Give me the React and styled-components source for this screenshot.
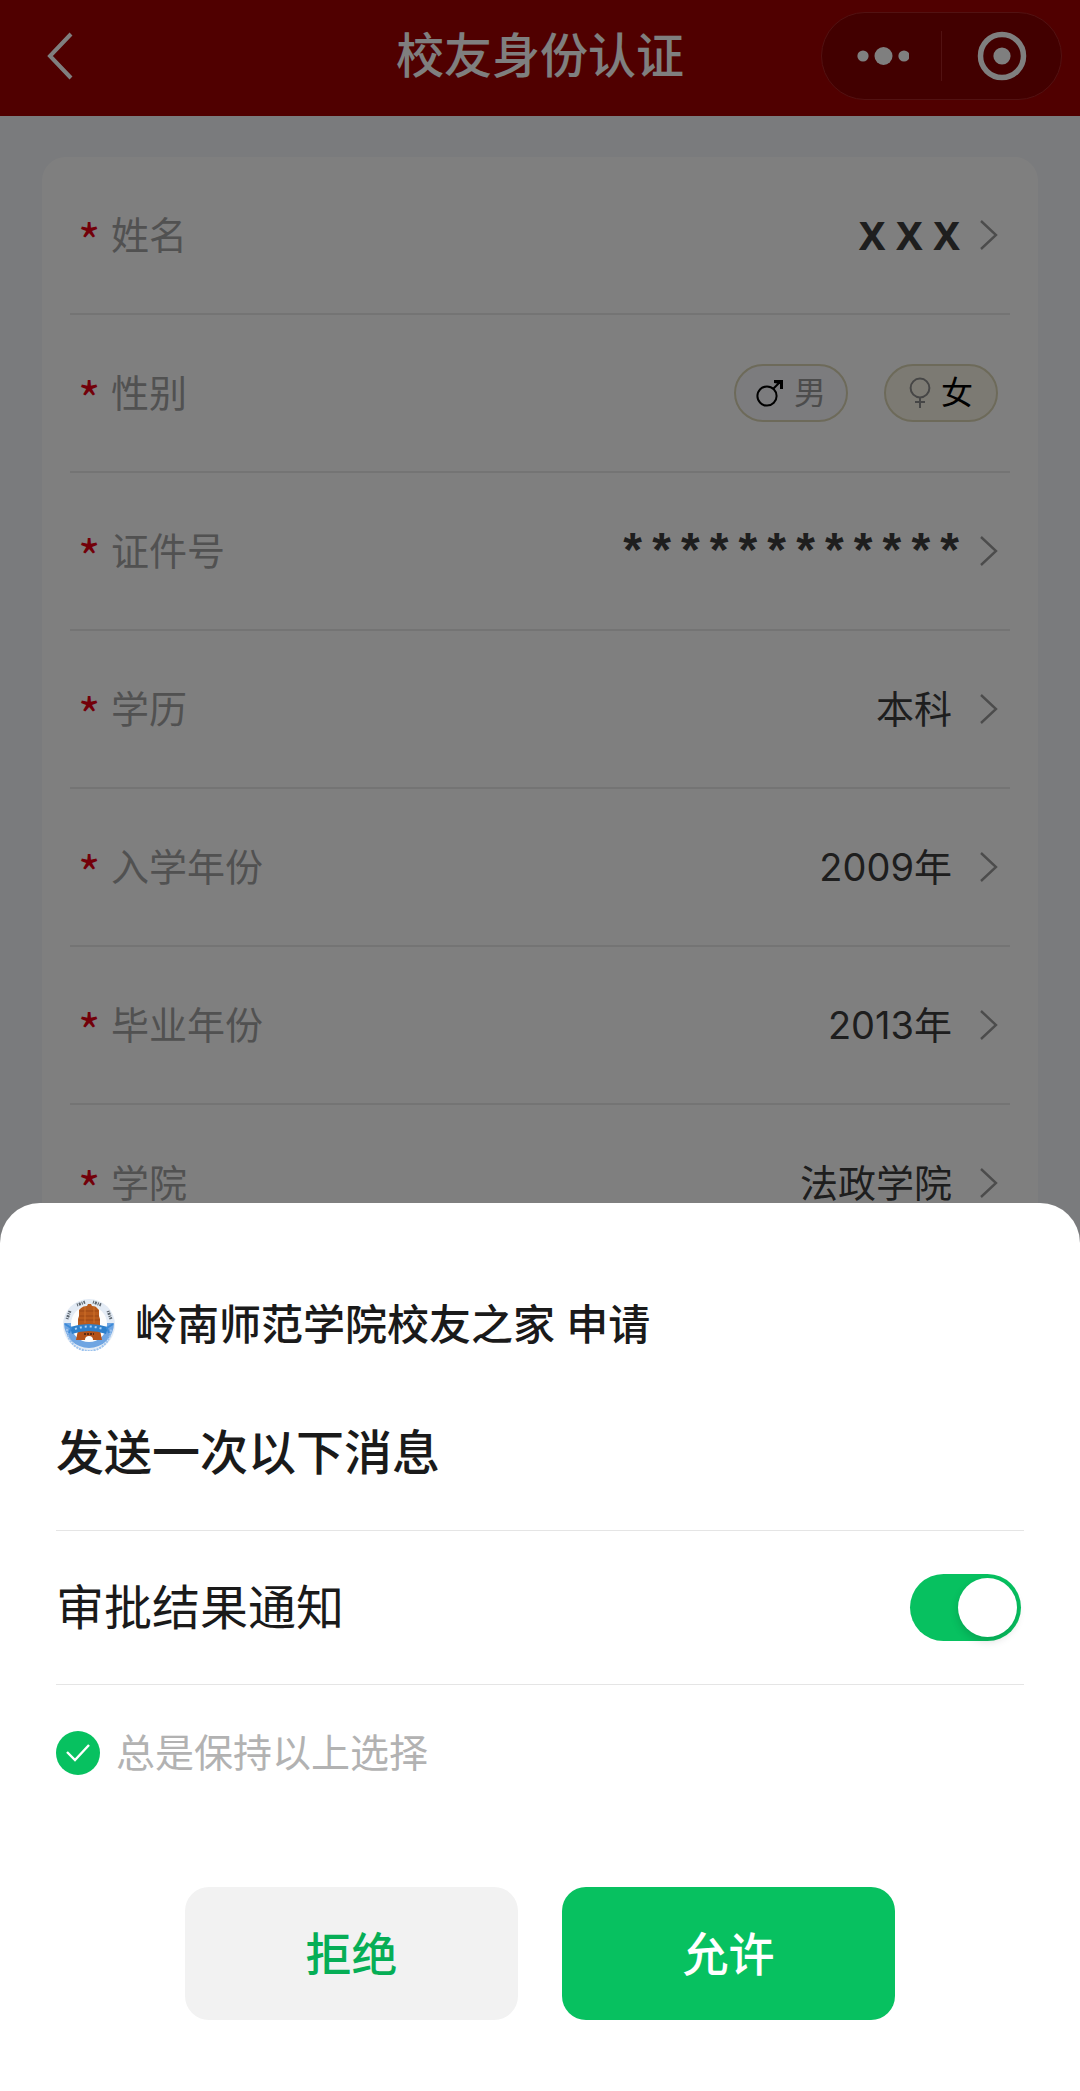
import React, { useState } from 'react'
import styled, { createGlobalStyle } from 'styled-components'

const fields = [
    { id: 'name', label: '姓名', value: 'X X X', kind: 'name' },
    { id: 'gender', label: '性别' },
    { id: 'idcard', label: '证件号', value: '************', kind: 'secret' },
    { id: 'degree', label: '学历', value: '本科' },
    { id: 'start', label: '入学年份', value: '2009年' },
    { id: 'end', label: '毕业年份', value: '2013年' },
    { id: 'college', label: '学院', value: '法政学院' },
]

const ArrowRight = () => (
    <svg width="18" height="30" viewBox="0 0 18 30" fill="none" stroke="#999" strokeWidth="2.4" aria-hidden="true">
        <path d="M1 1 L16 15 L1 29" />
    </svg>
)

const MaleIcon = () => (
    <svg width="28" height="28" viewBox="0 0 28 28" fill="none" stroke="#000" strokeWidth="2" aria-hidden="true">
        <circle cx="11" cy="17" r="9.6" />
        <path d="M17 10 L24 3" />
        <path d="M18 1 H27 V10 H24 V5 L18 4 Z" fill="#000" stroke="none" />
    </svg>
)

const FemaleIcon = () => (
    <svg width="22" height="32" viewBox="0 0 22 32" fill="none" stroke="#8c8c8c" strokeWidth="2" aria-hidden="true">
        <circle cx="11" cy="11" r="9.4" />
        <path d="M11 20 V31 M6 25 H16" />
    </svg>
)

const SchoolLogo = () => (
    <svg width="52" height="52" viewBox="0 0 52 52" aria-hidden="true">
        <circle cx="26" cy="26" r="26" fill="#e3ebf5" />
        <path d="M1 24 A25 25 0 0 0 51 24 L44 24 A18 18 0 0 1 8 24 Z" fill="#6fa5e2" />
        <circle cx="26" cy="25" r="18" fill="#fdfdfd" />
        <path
            d="M4 30 A22 22 0 0 0 48 30"
            fill="none"
            stroke="#9cc3ee"
            strokeWidth="2"
            strokeDasharray="2 1"
        />
        {/* motto marks round the top of the ring */}
        <g stroke="#5a636c" strokeWidth="3" strokeDasharray="1 1 2 1" fill="none">
            <path d="M4 20 L7 12" />
            <path d="M14 6 L22 3" />
            <path d="M30 3 L38 6" />
            <path d="M45 12 L48 20" />
        </g>
        <path d="M18 9 Q20 7 24 7 L25 5 H28 L29 7 Q33 7 34 9 L36 11 V17 L37 20 V26 H15 V20 L16 17 V11 Z" fill="#b85a1c" />
        <path d="M17 12 H35 M16 17 H36 M16 21 H37" stroke="#9a4714" strokeWidth="1" />
        <path d="M22 8 V24 M31 8 V24" stroke="#cf7029" strokeWidth="1" />
        <path d="M15 31 H37 L39 41 H30 Q30 37 26 37 Q22 37 22 41 H13 Z" fill="#b4521a" />
        <path d="M21 35 H31" stroke="#5d2a12" strokeWidth="2" strokeDasharray="2 1" />
        <path d="M7 28 Q26 22 45 28 L43 35 Q26 29 9 35 Z" fill="#2d7fcb" />
        <path d="M12 30 Q26 25 40 30" fill="none" stroke="#a9d0f5" strokeWidth="2" strokeDasharray="2 3" />
        <path d="M2 25 L8 29 L6 34 M50 25 L44 29 L46 34" fill="none" stroke="#3d8bd8" strokeWidth="2" />
    </svg>
)

const App = function () {
    const [gender, setGender] = useState('female')
    const [notify, setNotify] = useState(true)
    const [keep, setKeep] = useState(true)

    return (
        <>
            <GlobalStyle />
            <Page>
                <NavBar>
                    <BackButton aria-label="返回">
                        <svg width="28" height="48" viewBox="0 0 28 48" fill="none" stroke="#fff" strokeWidth="4">
                            <path d="M25 2 L4 24 L25 46" />
                        </svg>
                    </BackButton>
                    <NavTitle>校友身份认证</NavTitle>
                    <Capsule>
                        <CapsuleButton aria-label="更多">
                            <svg width="54" height="20" viewBox="0 0 54 20" fill="#fff">
                                <circle cx="8" cy="10" r="5.6" />
                                <circle cx="28.5" cy="10" r="9" />
                                <circle cx="49" cy="10" r="5.6" />
                            </svg>
                        </CapsuleButton>
                        <CapsuleLine />
                        <CapsuleButton aria-label="关闭">
                            <svg width="50" height="50" viewBox="0 0 50 50">
                                <circle cx="25" cy="25" r="21.5" fill="none" stroke="#fff" strokeWidth="5.5" />
                                <circle cx="25" cy="25" r="8.6" fill="#fff" />
                            </svg>
                        </CapsuleButton>
                    </Capsule>
                </NavBar>

                <Content>
                    <Card>
                        {
                            fields.map((field) => (
                                <Row key={field.id}>
                                    <Label id={field.id}>
                                        <Star>*</Star>
                                        {field.label}
                                    </Label>
                                    {field.id === 'gender' ? (
                                        <Pills role="radiogroup" aria-labelledby="gender">
                                            <Pill $active={gender === 'male'}>
                                                <HiddenInput
                                                    type="radio"
                                                    name="gender"
                                                    checked={gender === 'male'}
                                                    onChange={() => setGender('male')}
                                                />
                                                <MaleIcon />
                                                <span>男</span>
                                            </Pill>
                                            <Pill $active={gender === 'female'}>
                                                <HiddenInput
                                                    type="radio"
                                                    name="gender"
                                                    checked={gender === 'female'}
                                                    onChange={() => setGender('female')}
                                                />
                                                <FemaleIcon />
                                                <span>女</span>
                                            </Pill>
                                        </Pills>
                                    ) : (
                                        <ValueButton $kind={field.kind} aria-describedby={field.id}>
                                            <Value $kind={field.kind}>{field.value}</Value>
                                            <ArrowRight />
                                        </ValueButton>
                                    )}
                                </Row>
                            ))
                        }
                    </Card>
                </Content>
            </Page>

            <Mask>
                <Sheet role="dialog" aria-labelledby="sheet-title">
                    <Applicant>
                        <SchoolLogo />
                        <span>岭南师范学院校友之家 申请</span>
                    </Applicant>
                    <SheetTitle id="sheet-title">发送一次以下消息</SheetTitle>
                    <NoticeRow>
                        <span>审批结果通知</span>
                        <Switch
                            type="checkbox"
                            role="switch"
                            checked={notify}
                            onChange={() => setNotify(!notify)}
                        />
                    </NoticeRow>
                    <KeepRow>
                        <HiddenInput type="checkbox" checked={keep} onChange={() => setKeep(!keep)} />
                        <Tick $on={keep}>
                            <svg width="24" height="18" viewBox="0 0 24 18" fill="none" stroke="#fff" strokeWidth="2.4">
                                <path d="M1 8 L9 16 L23 1" />
                            </svg>
                        </Tick>
                        <span>总是保持以上选择</span>
                    </KeepRow>
                    <Actions>
                        <ActionButton>拒绝</ActionButton>
                        <ActionButton $primary>允许</ActionButton>
                    </Actions>
                </Sheet>
            </Mask>
        </>
    )
}

const GlobalStyle = createGlobalStyle`
    * {
        box-sizing: border-box;
    }

    body {
        margin: 0;
        font-family: Inter, "Noto Sans CJK SC", sans-serif;
    }

    button {
        margin: 0;
        padding: 0;
        border: 0;
        background: none;
        font-family: inherit;
        cursor: pointer;
    }

    svg {
        display: block;
        flex: none;
    }
`

const Page = styled.div`
    display: flex;
    flex-direction: column;
    height: 100vh;
    overflow: hidden;
    background: #f5f7fa;
`

const NavBar = styled.header`
    display: grid;
    grid-template-columns: 1fr auto 1fr;
    align-items: center;
    flex: none;
    height: 116px;
    padding: 0 18px 4px 46px;
    background: #a00000;
`

const BackButton = styled.button`
    justify-self: start;
`

const NavTitle = styled.h1`
    margin: 0;
    padding-right: 28px;
    color: #fff;
    font-size: 48px;
    font-weight: 500;
    line-height: 64px;
`

const Capsule = styled.div`
    display: flex;
    align-items: center;
    justify-self: end;
    width: 241px;
    height: 88px;
    border: 1px solid #a52424;
    border-radius: 44px;
    background: #840000;
`

const CapsuleButton = styled.button`
    display: flex;
    flex: 1;
    justify-content: center;
`

const CapsuleLine = styled.span`
    width: 1px;
    height: 50px;
    background: #a52424;
`

const Content = styled.main`
    display: flex;
    flex: 1;
    padding: 41px 42px 0;
`

const Card = styled.div`
    flex: 1;
    padding: 0 28px;
    border-radius: 24px 24px 0 0;
    background: #fff;
`

const Row = styled.div`
    display: flex;
    align-items: center;
    justify-content: space-between;
    height: 158px;
    padding: 0 12px 0 8px;
    border-bottom: 2px solid #e8e8e8;
`

const Label = styled.div`
    display: flex;
    align-items: center;
    color: #a3a3a3;
    font-size: 38px;
    line-height: 56px;
`

const Star = styled.span`
    width: 33px;
    padding-top: 8px;
    color: #e60012;
    font-family: "Noto Sans CJK SC", sans-serif;
    font-size: 48px;
`

const ValueButton = styled.button`
    display: flex;
    align-items: center;
    gap: ${(props) => gaps[props.$kind] || '28px'};
`

const gaps = {
    name: '20px',
    secret: '16px',
}

const valueFonts = {
    name: 'bold 40px "Noto Sans", sans-serif',
    secret: 'bold 48px "Liberation Mono", monospace',
}

const Value = styled.span`
    padding-top: ${(props) => (props.$kind === 'secret' ? '8px' : '0')};
    color: #3d3d3d;
    font: ${(props) => valueFonts[props.$kind] || '38px Inter, "Noto Sans CJK SC", sans-serif'};
    line-height: 56px;
`

const Pills = styled.div`
    display: flex;
    gap: 36px;
`

const Pill = styled.label`
    display: flex;
    align-items: center;
    justify-content: center;
    gap: 10px;
    width: 114px;
    height: 58px;
    border: 2px solid #dbd5b4;
    border-radius: 29px;
    background: ${(props) => (props.$active ? '#f9f5e6' : '#f8f8fc')};
    color: ${(props) => (props.$active ? '#000' : '#999')};
    font-size: 32px;
    line-height: 48px;
    cursor: pointer;
`

const HiddenInput = styled.input`
    position: absolute;
    width: 1px;
    height: 1px;
    margin: 0;
    opacity: 0;
`

const Mask = styled.div`
    position: fixed;
    inset: 0;
    display: flex;
    flex-direction: column;
    justify-content: flex-end;
    background: rgba(0, 0, 0, 0.5);
`

const Sheet = styled.section`
    padding: 90px 56px 71px;
    border-radius: 40px 40px 0 0;
    background: #fff;
    color: #1a1a1a;
`

const Applicant = styled.div`
    display: flex;
    align-items: center;
    gap: 20px;
    padding-left: 7px;
    font-size: 42px;
    font-weight: 500;
    line-height: 64px;
`

const SheetTitle = styled.h2`
    margin: 0;
    padding: 64px 0 45px;
    border-bottom: 1px solid #e5e5e5;
    font-size: 48px;
    font-weight: 500;
    line-height: 64px;
`

const NoticeRow = styled.label`
    display: flex;
    align-items: center;
    justify-content: space-between;
    height: 154px;
    padding-right: 3px;
    border-bottom: 1px solid #e5e5e5;
    font-size: 48px;
    line-height: 64px;
`

const Switch = styled.input`
    appearance: none;
    display: flex;
    justify-content: ${(props) => (props.checked ? 'flex-end' : 'flex-start')};
    width: 111px;
    height: 67px;
    margin: 0;
    padding: 4px;
    border-radius: 34px;
    background: ${(props) => (props.checked ? '#07c160' : '#ddd')};
    cursor: pointer;

    &::before {
        content: '';
        width: 59px;
        height: 59px;
        border-radius: 50%;
        background: #fff;
        box-shadow: 0 4px 8px rgba(0, 0, 0, 0.15);
    }
`

const KeepRow = styled.label`
    display: flex;
    align-items: center;
    gap: 16px;
    padding-top: 40px;
    color: #b2b2b2;
    font-size: 39px;
    line-height: 56px;
`

const Tick = styled.span`
    display: flex;
    align-items: center;
    justify-content: center;
    width: 44px;
    height: 44px;
    border-radius: 50%;
    background: ${(props) => (props.$on ? '#07c160' : '#ddd')};
`

const Actions = styled.div`
    display: flex;
    justify-content: center;
    gap: 44px;
    padding-top: 106px;
`

const ActionButton = styled.button`
    width: 333px;
    height: 133px;
    border-radius: 24px;
    background: ${(props) => (props.$primary ? '#07c160' : '#f2f2f2')};
    color: ${(props) => (props.$primary ? '#fff' : '#06ae56')};
    font-size: 46px;
    font-weight: 500;
    line-height: 64px;
`

export default App
